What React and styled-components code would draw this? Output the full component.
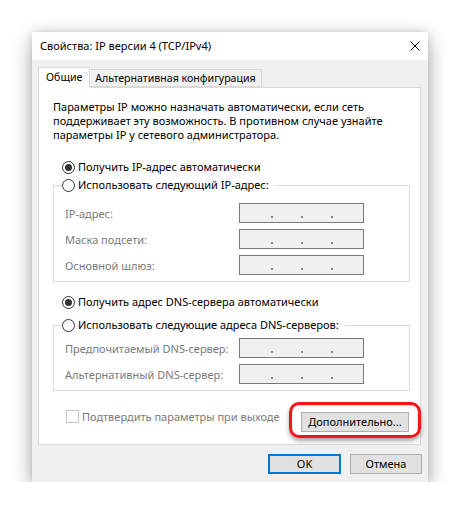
import React from "react";
import styled, { createGlobalStyle } from "styled-components";

const GlobalStyle = createGlobalStyle`
  body {
    margin: 0;
    background: #ffffff;
    font-family: "Noto Sans", "Open Sans", sans-serif;
    font-size: 11px;
    color: #000000;
  }
`;

const Page = styled.div`
  padding: 32px 0 0 32px;
`;

const Window = styled.div`
  width: 396px;
  height: 450px;
  box-sizing: border-box;
  background: #f0f0f0;
  display: flex;
  flex-direction: column;
  box-shadow: 0 7px 20px rgba(0, 0, 0, 0.32), 0 0 8px rgba(0, 0, 0, 0.12);
`;

const TitleBar = styled.div`
  height: 28px;
  background: #ffffff;
  display: flex;
  align-items: center;
  justify-content: space-between;
  padding: 0 8px;
  font-size: 11px;
  line-height: 16px;
`;

const CloseIcon = styled.svg`
  width: 10px;
  height: 10px;
  display: block;
`;

const Content = styled.div`
  padding: 7px 7px 0 6px;
  display: flex;
  flex-direction: column;
`;

const TabBar = styled.div`
  display: flex;
  align-items: flex-end;
  height: 20px;
  position: relative;
  z-index: 1;
`;

const Tab = styled.div`
  box-sizing: border-box;
  height: ${(p) => (p.$active ? "21px" : "18px")};
  margin-bottom: ${(p) => (p.$active ? "-1px" : "0")};
  padding: ${(p) => (p.$active ? "2px 7px 0" : "1px 5px 0")};
  background: ${(p) => (p.$active ? "#ffffff" : "#f0f0f0")};
  border: 1px solid #d9d9d9;
  border-bottom: ${(p) => (p.$active ? "none" : "1px solid #d9d9d9")};
  margin-left: ${(p) => (p.$first ? "0" : "-1px")};
  font-size: 10.6px;
  line-height: 15px;
  white-space: nowrap;
`;

const Panel = styled.div`
  box-sizing: border-box;
  height: 358px;
  background: #ffffff;
  border: 1px solid #d9d9d9;
  padding: 12px 10px 0 14px;
  display: flex;
  flex-direction: column;
`;

const Description = styled.div`
  display: flex;
  flex-direction: column;
`;

const DescLine = styled.span`
  height: 14px;
  line-height: 14px;
  white-space: nowrap;
`;

const RadioRow = styled.label`
  display: flex;
  align-items: center;
  gap: 3px;
  height: 16px;
  line-height: 16px;
  margin: ${(p) => p.$margin || "0"};
  white-space: nowrap;
`;

const RadioMark = styled.span`
  box-sizing: border-box;
  width: 13px;
  height: 13px;
  border-radius: 50%;
  border: 1px solid #333333;
  background: #ffffff;
  display: flex;
  align-items: center;
  justify-content: center;
  flex-shrink: 0;
  &::after {
    content: "";
    width: 7px;
    height: 7px;
    border-radius: 50%;
    background: ${(p) => (p.$checked ? "#333333" : "transparent")};
  }
`;

const Group = styled.fieldset`
  margin: ${(p) => p.$margin || "0"};
  padding: 0 45px 6px 11px;
  border: 1px solid #dcdcdc;
  min-width: 0;
`;

const Legend = styled.legend`
  padding: 0 6px 0 0;
  margin-left: -3px;
`;

const Rows = styled.div`
  display: flex;
  flex-direction: column;
  gap: 6px;
  margin-top: ${(p) => p.$top}px;
`;

const FieldRow = styled.div`
  display: flex;
  align-items: center;
  justify-content: space-between;
  height: 20px;
`;

const FieldLabel = styled.span`
  color: #7a7a7a;
  white-space: nowrap;
`;

const IpBox = styled.div`
  box-sizing: border-box;
  width: 125px;
  height: 20px;
  border: 1px solid #7a7a7a;
  background: #f0f0f0;
  display: flex;
  align-items: flex-end;
  padding: 0 0 3px 3px;
`;

const Octet = styled.span`
  width: 28px;
`;

const Dot = styled.span`
  width: 2px;
  height: 2px;
  margin-bottom: 1px;
  background: #7d8a94;
`;

const BottomRow = styled.div`
  display: flex;
  justify-content: space-between;
  align-items: flex-start;
`;

const CheckRow = styled.label`
  display: flex;
  align-items: center;
  gap: 3px;
  height: 16px;
  margin: 17px 0 0 13px;
  color: #7a7a7a;
  white-space: nowrap;
`;

const CheckBox = styled.span`
  box-sizing: border-box;
  width: 13px;
  height: 13px;
  border: 1px solid #c5c5c5;
  background: #ffffff;
`;

const Highlight = styled.div`
  display: flex;
  margin: 11px -11px 0 0;
  padding: 7px 9px 3px;
  border: 3px solid #f5141c;
  border-radius: 10px;
  box-shadow: 0 3px 4px rgba(0, 0, 0, 0.35), inset 0 1px 2px rgba(0, 0, 0, 0.15);
`;

const Button = styled.button`
  box-sizing: border-box;
  width: ${(p) => p.$width}px;
  height: 20px;
  padding: 0;
  font-family: inherit;
  font-size: 11px;
  color: #000000;
  background: #e1e1e1;
  border: ${(p) => (p.$default ? "2px solid #0078d7" : "1px solid #adadad")};
  line-height: 16px;
`;

const Footer = styled.div`
  display: flex;
  justify-content: flex-end;
  gap: 9px;
  padding: 9px 6px 0 0;
`;

function IpField() {
  return (
    <IpBox>
      <Octet />
      <Dot />
      <Octet />
      <Dot />
      <Octet />
      <Dot />
    </IpBox>
  );
}

export default function App() {
  return (
    <>
      <GlobalStyle />
      <Page>
        <Window>
          <TitleBar>
            <span>Свойства: IP версии 4 (TCP/IPv4)</span>
            <CloseIcon viewBox="0 0 10 10">
              <path d="M0.5 0.5 L9.5 9.5 M9.5 0.5 L0.5 9.5" stroke="#000" strokeWidth="1" />
            </CloseIcon>
          </TitleBar>
          <Content>
            <TabBar>
              <Tab $active $first>Общие</Tab>
              <Tab>Альтернативная конфигурация</Tab>
            </TabBar>
            <Panel>
              <Description>
                <DescLine>Параметры IP можно назначать автоматически, если сеть</DescLine>
                <DescLine>поддерживает эту возможность. В противном случае узнайте</DescLine>
                <DescLine>параметры IP у сетевого администратора.</DescLine>
              </Description>

              <RadioRow $margin="17px 0 0 9px">
                <RadioMark $checked />
                Получить IP-адрес автоматически
              </RadioRow>
              <Group $margin="2px 0 0 0">
                <Legend>
                  <RadioRow>
                    <RadioMark />
                    Использовать следующий IP-адрес:
                  </RadioRow>
                </Legend>
                <Rows $top={10}>
                  <FieldRow>
                    <FieldLabel>IP-адрес:</FieldLabel>
                    <IpField />
                  </FieldRow>
                  <FieldRow>
                    <FieldLabel>Маска подсети:</FieldLabel>
                    <IpField />
                  </FieldRow>
                  <FieldRow>
                    <FieldLabel>Основной шлюз:</FieldLabel>
                    <IpField />
                  </FieldRow>
                </Rows>
              </Group>

              <RadioRow $margin="12px 0 0 9px">
                <RadioMark $checked />
                Получить адрес DNS-сервера автоматически
              </RadioRow>
              <Group $margin="7px 0 0 0">
                <Legend>
                  <RadioRow>
                    <RadioMark />
                    Использовать следующие адреса DNS-серверов:
                  </RadioRow>
                </Legend>
                <Rows $top={5}>
                  <FieldRow>
                    <FieldLabel>Предпочитаемый DNS-сервер:</FieldLabel>
                    <IpField />
                  </FieldRow>
                  <FieldRow>
                    <FieldLabel>Альтернативный DNS-сервер:</FieldLabel>
                    <IpField />
                  </FieldRow>
                </Rows>
              </Group>

              <BottomRow>
                <CheckRow>
                  <CheckBox />
                  Подтвердить параметры при выходе
                </CheckRow>
                <Highlight>
                  <Button $width={108}>Дополнительно...</Button>
                </Highlight>
              </BottomRow>
            </Panel>
          </Content>
          <Footer>
            <Button $default $width={73}>OK</Button>
            <Button $width={72}>Отмена</Button>
          </Footer>
        </Window>
      </Page>
    </>
  );
}
